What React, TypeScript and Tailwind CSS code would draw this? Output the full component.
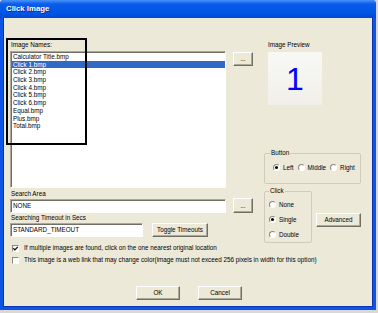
import type { ReactNode } from 'react';

const files = [
  'Calculator Title.bmp',
  'Click 1.bmp',
  'Click 2.bmp',
  'Click 3.bmp',
  'Click 4.bmp',
  'Click 5.bmp',
  'Click 6.bmp',
  'Equal.bmp',
  'Plus.bmp',
  'Total.bmp',
];

function Btn({ className = '', children }: { className?: string; children: ReactNode }) {
  return (
    <div
      className={`flex items-center justify-center border border-t-white border-l-white border-r-[#716f64] border-b-[#716f64] bg-[#ece9d8] shadow-[inset_-1px_-1px_0_#aca899] ${className}`}
    >
      {children}
    </div>
  );
}

function Field({ className = '', children }: { className?: string; children?: ReactNode }) {
  return (
    <div
      className={`flex items-center border border-t-[#aca899] border-l-[#aca899] border-r-white border-b-white bg-white pl-[2px] shadow-[inset_1px_1px_0_#716f64] ${className}`}
    >
      {children}
    </div>
  );
}

function Radio({ checked = false }: { checked?: boolean }) {
  return (
    <span className="flex h-[7px] w-[7px] shrink-0 items-center justify-center rounded-full border border-t-[#8a8878] border-l-[#8a8878] border-r-white border-b-white bg-white">
      {checked && <span className="h-[3px] w-[3px] rounded-full bg-black" />}
    </span>
  );
}

function Check({ checked = false }: { checked?: boolean }) {
  return (
    <span className="flex h-[7px] w-[7px] shrink-0 items-center justify-center border border-t-[#8a8878] border-l-[#8a8878] border-r-white border-b-white bg-white">
      {checked && (
        <svg width="5" height="5" viewBox="0 0 5 5">
          <path d="M0.3 2.2 L1.9 3.9 L4.8 0.8" stroke="#000" strokeWidth="1.2" fill="none" />
        </svg>
      )}
    </span>
  );
}

export default function App() {
  return (
    <div className="h-[313px] w-[378px] bg-[#d8d8d8] font-['Liberation_Sans',Arial,sans-serif] text-[6.3px] text-black">
      <div className="flex h-[310px] w-[376px] flex-col overflow-hidden rounded-t-[4px] bg-[#0d55e4]">
        {/* Title bar */}
        <div className="flex h-[18px] shrink-0 items-center bg-[linear-gradient(to_bottom,#4a93fb,#0a5ce9_22%,#0055e5_75%,#0046d2)] pl-[6px]">
          <span className="text-[7.8px] font-bold text-white [text-shadow:1px_1px_0_#0a2a8a]">Click Image</span>
        </div>

        {/* Client area */}
        <div className="relative mx-[3px] mb-[3px] flex flex-1 flex-col border border-t-0 border-[#0a34b0] bg-[#ece9d8] pl-[6px]">
          <div className="flex h-[225px] shrink-0 items-start">
            {/* Left column */}
            <div className="flex w-[216px] flex-col">
              <div className="mt-[22px] h-[10px] pl-[1px] leading-[10px]">Image Names:</div>
              <div className="mt-[1px] h-[137px] border border-t-[#aca899] border-l-[#aca899] border-r-white border-b-white bg-white shadow-[inset_1px_1px_0_#716f64]">
                <div className="pt-[1px] pl-[1px]">
                  {files.map((f, i) => (
                    <div
                      key={f}
                      className={`h-[7.7px] pl-[1px] leading-[7.7px] ${i === 1 ? 'bg-[#316ac5] text-white' : ''}`}
                    >
                      {f}
                    </div>
                  ))}
                </div>
              </div>
              <div className="mt-[1px] h-[10px] pl-[1px] leading-[10px]">Search Area</div>
              <Field className="h-[14px]">NONE</Field>
              <div className="h-[10px] pl-[1px] leading-[10px]">Searching Timeout in Secs</div>
              <div className="flex h-[14px] items-center">
                <Field className="h-[14px] w-[133px]">STANDARD_TIMEOUT</Field>
                <Btn className="ml-[9px] h-[14px] w-[56px]">Toggle Timeouts</Btn>
              </div>
            </div>

            {/* Browse buttons */}
            <div className="ml-[7px] flex flex-col">
              <Btn className="mt-[34px] h-[14px] w-[20px]">...</Btn>
              <Btn className="mt-[132px] h-[15px] w-[20px]">...</Btn>
            </div>

            {/* Right column */}
            <div className="ml-[11px] flex w-[97px] flex-col">
              <div className="mt-[22px] h-[10px] pl-[4px] leading-[10px]">Image Preview</div>
              <div className="ml-[4px] mt-[2px] flex h-[53px] w-[54px] items-center justify-center bg-[linear-gradient(to_bottom,#f8f8f5,#f0efea)]">
                <span className="text-[32px] leading-none text-[#0000ff]">1</span>
              </div>

              <fieldset className="mt-[44px] h-[35px] w-[97px] rounded-[2px] border border-[#cfccbc] px-[5px]">
                <legend className="px-[1px] leading-[8px]">Button</legend>
                <div className="mt-[6px] flex items-center pl-[3px]">
                  <Radio checked />
                  <span className="ml-[3px]">Left</span>
                  <span className="ml-[4px]">
                    <Radio />
                  </span>
                  <span className="ml-[3px]">Middle</span>
                  <span className="ml-[4px]">
                    <Radio />
                  </span>
                  <span className="ml-[3px]">Right</span>
                </div>
              </fieldset>

              <div className="mt-[3px] flex items-start">
                <fieldset className="h-[56px] w-[48px] rounded-[2px] border border-[#cfccbc] px-[4px]">
                  <legend className="px-[1px] leading-[8px]">Click</legend>
                  <div className="mt-[6px] flex flex-col gap-[8px]">
                    <div className="flex h-[7px] items-center">
                      <Radio />
                      <span className="ml-[3px]">None</span>
                    </div>
                    <div className="flex h-[7px] items-center">
                      <Radio checked />
                      <span className="ml-[3px]">Single</span>
                    </div>
                    <div className="flex h-[7px] items-center">
                      <Radio />
                      <span className="ml-[3px]">Double</span>
                    </div>
                  </div>
                </fieldset>
                <Btn className="ml-[4px] mt-[26px] h-[14px] w-[45px]">Advanced</Btn>
              </div>
            </div>
          </div>

          {/* Options */}
          <div className="flex h-[10px] items-center pl-[2px]">
            <Check checked />
            <span className="ml-[5px]">If multiple images are found, click on the one nearest original location</span>
          </div>
          <div className="mt-[2px] flex h-[10px] items-center pl-[2px]">
            <Check />
            <span className="ml-[5px]">
              This image is a web link that may change color(image must not exceed 256 pixels in width for this option)
            </span>
          </div>

          {/* Dialog buttons */}
          <div className="mt-[21px] flex pl-[126px]">
            <Btn className="h-[14px] w-[44px]">OK</Btn>
            <Btn className="ml-[18px] h-[14px] w-[44px]">Cancel</Btn>
          </div>

          {/* Annotation */}
          <div className="pointer-events-none absolute left-[2px] top-[20px] h-[107px] w-[81px] border-2 border-black" />
        </div>
      </div>
    </div>
  );
}
